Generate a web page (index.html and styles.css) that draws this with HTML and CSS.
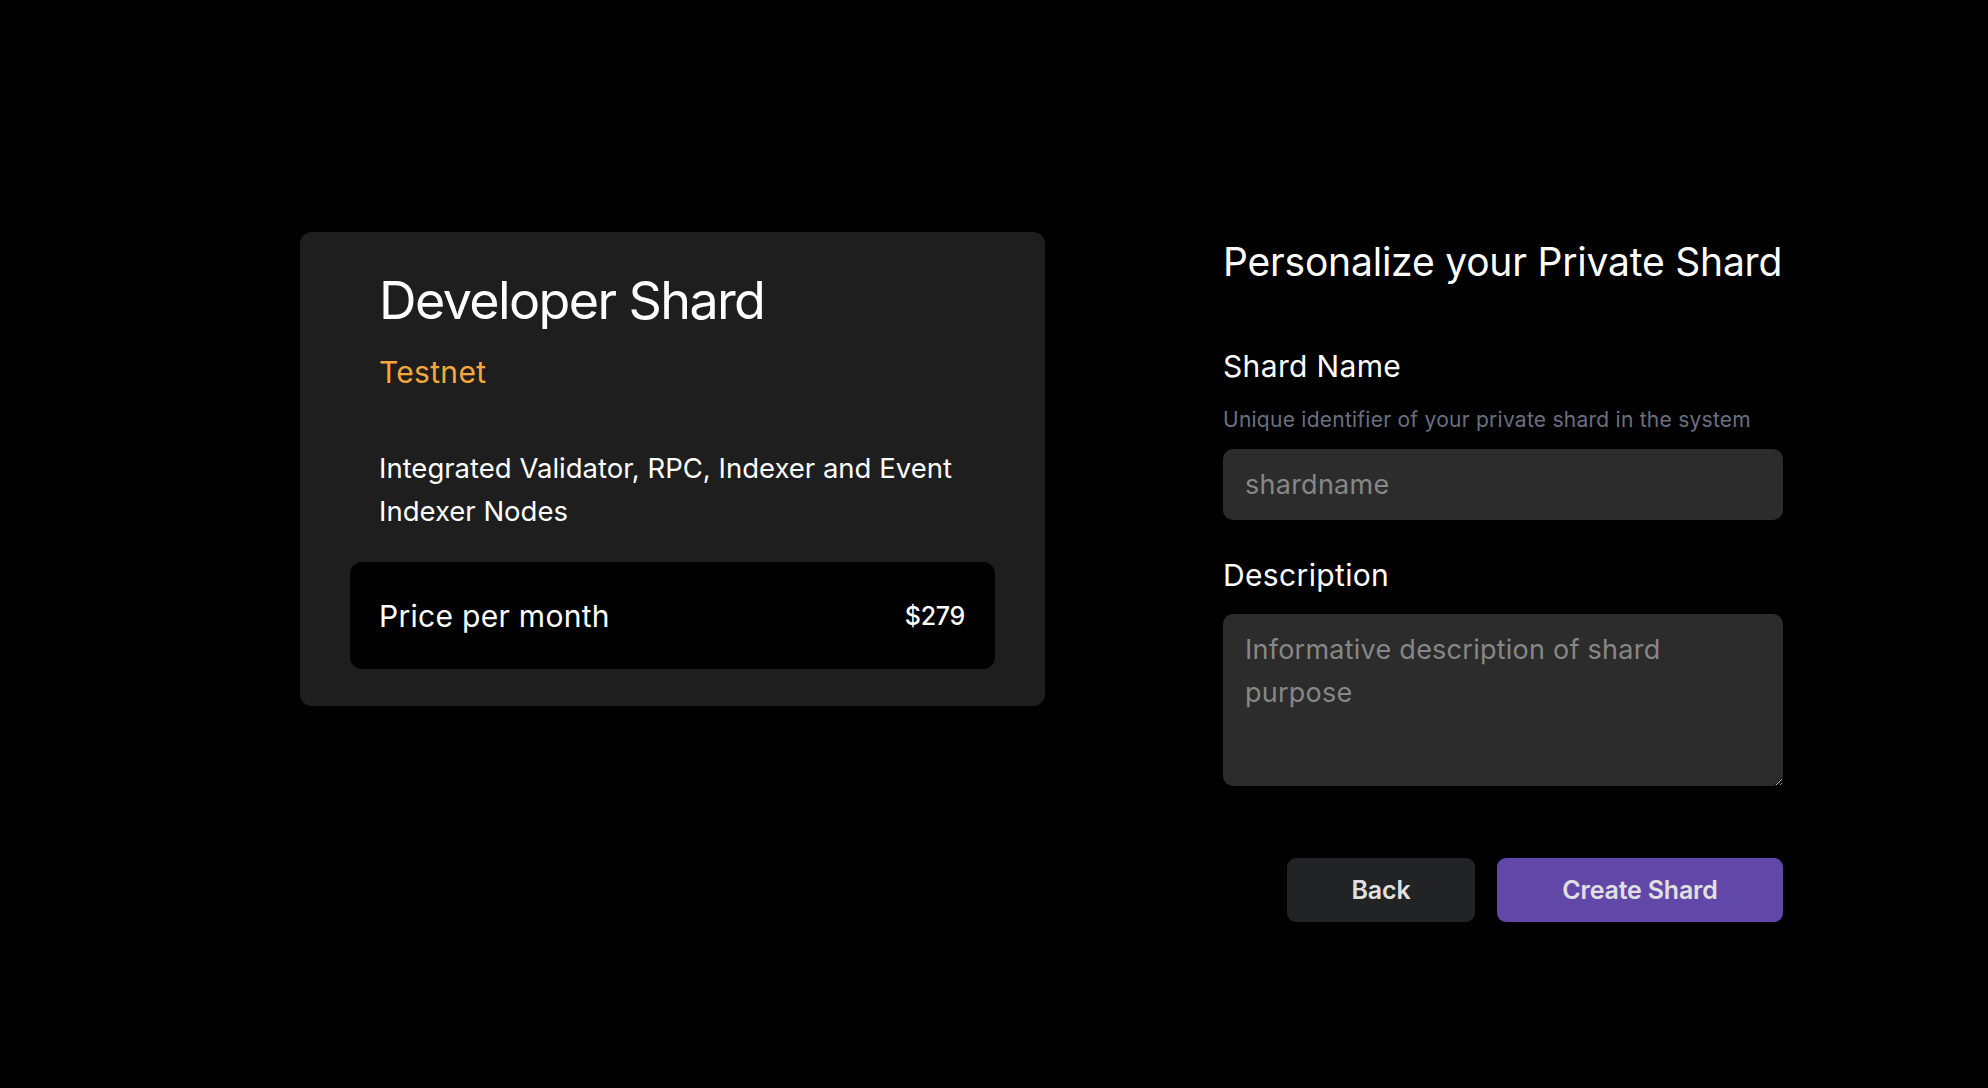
FILE: index.html
```html
<!DOCTYPE html>
<html lang="en">
<head>
<meta charset="utf-8">
<title>Personalize your Private Shard</title>
<link rel="stylesheet" href="styles.css">
</head>
<body>
<main class="page">
  <section class="plan-card">
    <h1 class="plan-title">Developer Shard</h1>
    <div class="plan-network">Testnet</div>
    <p class="plan-desc">Integrated Validator, RPC, Indexer and Event Indexer Nodes</p>
    <div class="price-box">
      <span class="price-label">Price per month</span>
      <span class="price-value">$279</span>
    </div>
  </section>
  <section class="form">
    <h2 class="form-title">Personalize your Private Shard</h2>
    <label class="field-label" for="shardname">Shard Name</label>
    <div class="field-help">Unique identifier of your private shard in the system</div>
    <input class="field-input" id="shardname" type="text" placeholder="shardname">
    <label class="field-label label-desc" for="desc">Description</label>
    <textarea class="field-textarea" id="desc" placeholder="Informative description of shard purpose"></textarea>
    <div class="actions">
      <button class="btn btn-back" type="button">Back</button>
      <button class="btn btn-create" type="button">Create Shard</button>
    </div>
  </section>
</main>
</body>
</html>
```
FILE: styles.css
```css
* { box-sizing: border-box; }
html, body {
  margin: 0;
  padding: 0;
  background: #000;
  color: #fff;
  font-family: Inter, "Noto Sans", sans-serif;
}
.page {
  display: flex;
  align-items: flex-start;
  gap: 178px;
  padding: 232px 0 0 300px;
}
.plan-card {
  width: 745px;
  background: #1e1e1e;
  border-radius: 12px;
  padding: 38px 50px 37px;
}
.plan-title {
  margin: 0 0 0 29px;
  font-size: 52px;
  line-height: 62px;
  font-weight: 400;
  letter-spacing: -1.6px;
}
.plan-network {
  margin: 22px 0 0 29px;
  font-size: 30px;
  line-height: 36px;
  color: #f5a83a;
  letter-spacing: 0.3px;
}
.plan-desc {
  margin: 57px 0 0 29px;
  font-size: 27.5px;
  line-height: 43px;
  letter-spacing: 0;
}
.price-box {
  margin-top: 29px;
  height: 107px;
  background: #000;
  border-radius: 12px;
  padding: 0 30px 0 29px;
  display: flex;
  align-items: center;
  justify-content: space-between;
}
.price-label {
  font-size: 30px;
  line-height: 36px;
  letter-spacing: 0.3px;
}
.price-value {
  font-size: 25px;
  line-height: 30px;
  font-weight: 500;
  letter-spacing: -0.3px;
}
.form {
  width: 560px;
  display: flex;
  flex-direction: column;
  padding-top: 6px;
}
.form-title {
  margin: 0;
  font-size: 39px;
  line-height: 48px;
  font-weight: 400;
  letter-spacing: -0.2px;
}
.field-label {
  display: block;
  margin-top: 62px;
  font-size: 30px;
  line-height: 36px;
  letter-spacing: 0.35px;
}
.label-desc { margin-top: 37px; }
.field-help {
  margin-top: 22px;
  font-size: 21px;
  line-height: 28px;
  color: #6b7080;
  letter-spacing: 0.25px;
}
.field-input, .field-textarea {
  display: block;
  width: 100%;
  border: none;
  outline: none;
  background: #2c2c2c;
  border-radius: 10px;
  color: #fff;
  font-family: inherit;
  font-size: 27px;
  letter-spacing: 0.25px;
  color-scheme: dark;
}
.field-input {
  margin-top: 15px;
  height: 71px;
  padding: 0 22px;
}
.field-textarea {
  margin-top: 21px;
  height: 172px;
  padding: 14px 40px 14px 22px;
  line-height: 43px;
  resize: vertical;
}
.field-input::placeholder, .field-textarea::placeholder {
  color: #878787;
}
.actions {
  display: flex;
  justify-content: flex-end;
  gap: 22px;
  margin-top: 72px;
}
.btn {
  height: 64px;
  border: none;
  border-radius: 9px;
  font-family: inherit;
  font-size: 25px;
  font-weight: 600;
  color: #e0e0e0;
  letter-spacing: -0.2px;
  cursor: pointer;
}
.btn-back {
  width: 188px;
  background: #222325;
}
.btn-create {
  width: 286px;
  background: #6147a8;
}
```
